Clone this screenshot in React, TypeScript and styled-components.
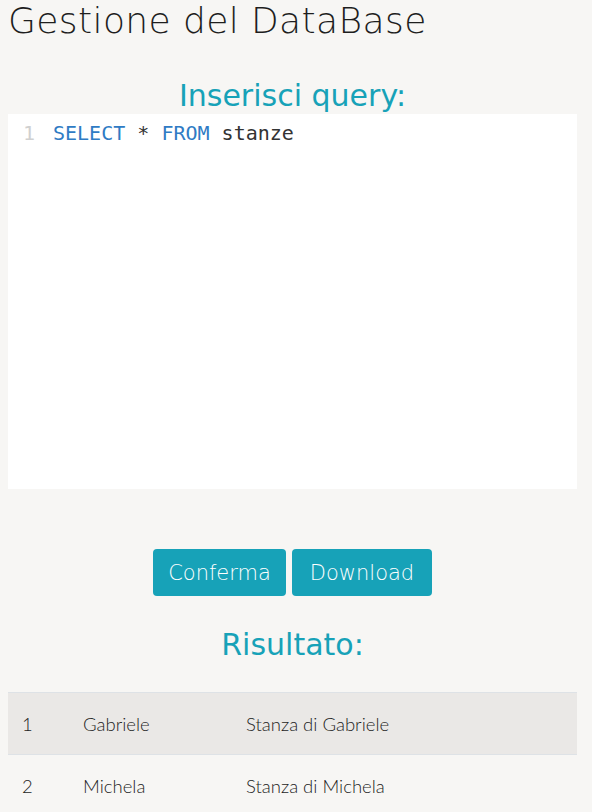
import React from "react";
import styled, { createGlobalStyle } from "styled-components";

const Global = createGlobalStyle`
  html, body { margin: 0; padding: 0; background: #f7f6f4; }
  body { font-family: "DejaVu Sans", "Liberation Sans", sans-serif; color: #222; }
`;

const Page = styled.div`
  width: 569px;
  padding: 0 15px 0 8px;
  display: flex;
  flex-direction: column;
`;

const Title = styled.h1`
  margin: 0;
  font-weight: 300;
  font-size: 36px;
  line-height: 42px;
  letter-spacing: 0.4px;
  color: #1e1e1e;
`;

const SectionTitle = styled.h2<{ $top: number }>`
  margin: ${(p) => p.$top}px 0 0;
  text-align: center;
  font-weight: 400;
  font-size: 30px;
  line-height: 36px;
  color: #17a2b8;
`;

const Editor = styled.div`
  background: #fff;
  height: 375px;
  display: flex;
  font-family: "DejaVu Sans Mono", "Liberation Mono", monospace;
  font-size: 20px;
  line-height: 28px;
  padding-top: 5px;
  box-sizing: border-box;
`;

const Gutter = styled.div`
  width: 45px;
  padding-left: 15px;
  color: #d0d0d0;
  box-sizing: border-box;
`;

const Code = styled.div`
  color: #333;
`;

const Kw = styled.span`
  color: #2f7bc4;
`;

const Buttons = styled.div`
  display: flex;
  justify-content: center;
  gap: 6px;
  margin-top: 60px;
`;

const Button = styled.button<{ $w: number }>`
  width: ${(p) => p.$w}px;
  height: 47px;
  border: none;
  border-radius: 4px;
  background: #17a2b8;
  color: #fff;
  font-family: "DejaVu Sans", sans-serif;
  font-weight: 300;
  font-size: 21px;
  padding: 0;
`;

const Table = styled.table`
  margin-top: 29px;
  width: 100%;
  border-collapse: collapse;
  font-family: "Lato", sans-serif;
  font-size: 18.5px;
  font-weight: 300;
`;

const Row = styled.tr<{ $striped?: boolean }>`
  background: ${(p) => (p.$striped ? "#eae8e6" : "transparent")};
  border-top: 1px solid #dee2e6;
  height: 62px;
`;

const Cell = styled.td<{ $w?: number }>`
  width: ${(p) => (p.$w ? `${p.$w}px` : "auto")};
  padding: 0 0 0 14px;
  box-sizing: border-box;
  color: #1e1e1e;
`;

const rows = [
  { id: 1, name: "Gabriele", room: "Stanza di Gabriele" },
  { id: 2, name: "Michela", room: "Stanza di Michela" },
];

export default function App() {
  return (
    <>
      <Global />
      <Page>
        <Title>Gestione del DataBase</Title>
        <SectionTitle $top={36}>Inserisci query:</SectionTitle>
        <Editor>
          <Gutter>1</Gutter>
          <Code>
            <Kw>SELECT</Kw> * <Kw>FROM</Kw> stanze
          </Code>
        </Editor>
        <Buttons>
          <Button $w={133}>Conferma</Button>
          <Button $w={140}>Download</Button>
        </Buttons>
        <SectionTitle $top={31}>Risultato:</SectionTitle>
        <Table>
          <tbody>
            {rows.map((r, i) => (
              <Row key={r.id} $striped={i % 2 === 0}>
                <Cell $w={61}>{r.id}</Cell>
                <Cell $w={163}>{r.name}</Cell>
                <Cell>{r.room}</Cell>
              </Row>
            ))}
          </tbody>
        </Table>
      </Page>
    </>
  );
}
